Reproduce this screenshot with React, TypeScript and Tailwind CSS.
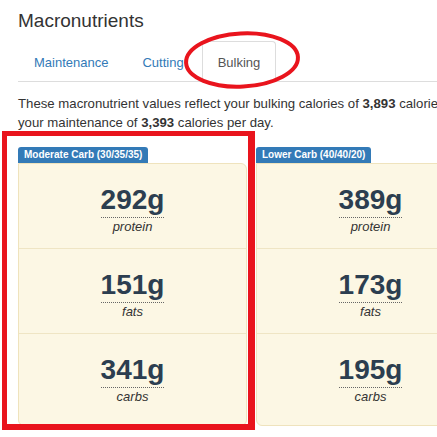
import React from 'react';

type Macro = { value: string; label: string };

const columns: { title: string; macros: Macro[] }[] = [
  {
    title: 'Moderate Carb (30/35/35)',
    macros: [
      { value: '292g', label: 'protein' },
      { value: '151g', label: 'fats' },
      { value: '341g', label: 'carbs' },
    ],
  },
  {
    title: 'Lower Carb (40/40/20)',
    macros: [
      { value: '389g', label: 'protein' },
      { value: '173g', label: 'fats' },
      { value: '195g', label: 'carbs' },
    ],
  },
];

const tabs = ['Maintenance', 'Cutting', 'Bulking'];

const MacroCard = ({ title, macros }: { title: string; macros: Macro[] }) => (
  <div className="w-[229px] shrink-0 flex flex-col">
    <span className="block w-fit h-[16px] px-[6px] rounded-t-[3px] bg-[#337ab7] text-white font-bold text-[10px] leading-[16px]">
      {title}
    </span>
    <div className="border border-[#efe3bd] bg-[#fcf7e4] rounded-tr-[6px] rounded-b-[6px] pb-[7px]">
      {macros.map((m, i) => (
        <div
          key={m.label}
          className={`flex flex-col items-center pt-[18px] pb-[12px] ${
            i < macros.length - 1 ? 'border-b border-[#efe5c4]' : ''
          }`}
        >
          <span className="block text-[28px] leading-[35px] font-bold text-[#2c3e50] border-b border-dotted border-[#666]">
            {m.value}
          </span>
          <span className="block text-[13px] leading-[18px] italic text-[#333]">{m.label}</span>
        </div>
      ))}
    </div>
  </div>
);

export default function App() {
  return (
    <div className="relative w-[437px] h-[437px] overflow-hidden bg-white text-[#333] font-['Liberation_Sans',Arial,sans-serif]">
      <div className="w-[720px] pl-[18px]">
        <h2 className="mt-[10px] text-[19px] leading-[22px] font-normal">Macronutrients</h2>

        {/* tabs */}
        <ul className="mt-[9px] flex border-b border-[#ddd] text-[13px] leading-[19px]">
          {tabs.map((t) => {
            const active = t === 'Bulking';
            return (
              <li key={t} className="-mb-px mr-[2px]">
                <a
                  className={`block px-[15px] pt-[11px] pb-[9px] border rounded-t-[4px] ${
                    active
                      ? 'border-[#ddd] border-b-transparent bg-white text-[#555]'
                      : 'border-transparent text-[#337ab7]'
                  }`}
                >
                  {t}
                </a>
              </li>
            );
          })}
        </ul>

        <p className="mt-[12px] text-[13.2px] leading-[19px] whitespace-nowrap">
          These macronutrient values reflect your bulking calories of <b>3,893</b> calories per day, which is 500
          calories above
          <br />
          your maintenance of <b>3,393</b> calories per day.
        </p>

        <div className="mt-[15px] flex gap-[9px]">
          {columns.map((c) => (
            <MacroCard key={c.title} title={c.title} macros={c.macros} />
          ))}
        </div>
      </div>

      {/* red annotations */}
      <div className="absolute left-[2px] top-[131px] w-[253px] h-[299px] border-t-[5px] border-l-[5px] border-r-[7px] border-b-[6px] border-[#e9141d] pointer-events-none" />
      <svg className="absolute left-0 top-0 pointer-events-none" width="437" height="120">
        <ellipse
          cx="242"
          cy="60"
          rx="56"
          ry="26.5"
          fill="none"
          stroke="#e9141d"
          strokeWidth="4"
          transform="rotate(-3 242 60)"
        />
      </svg>
    </div>
  );
}
